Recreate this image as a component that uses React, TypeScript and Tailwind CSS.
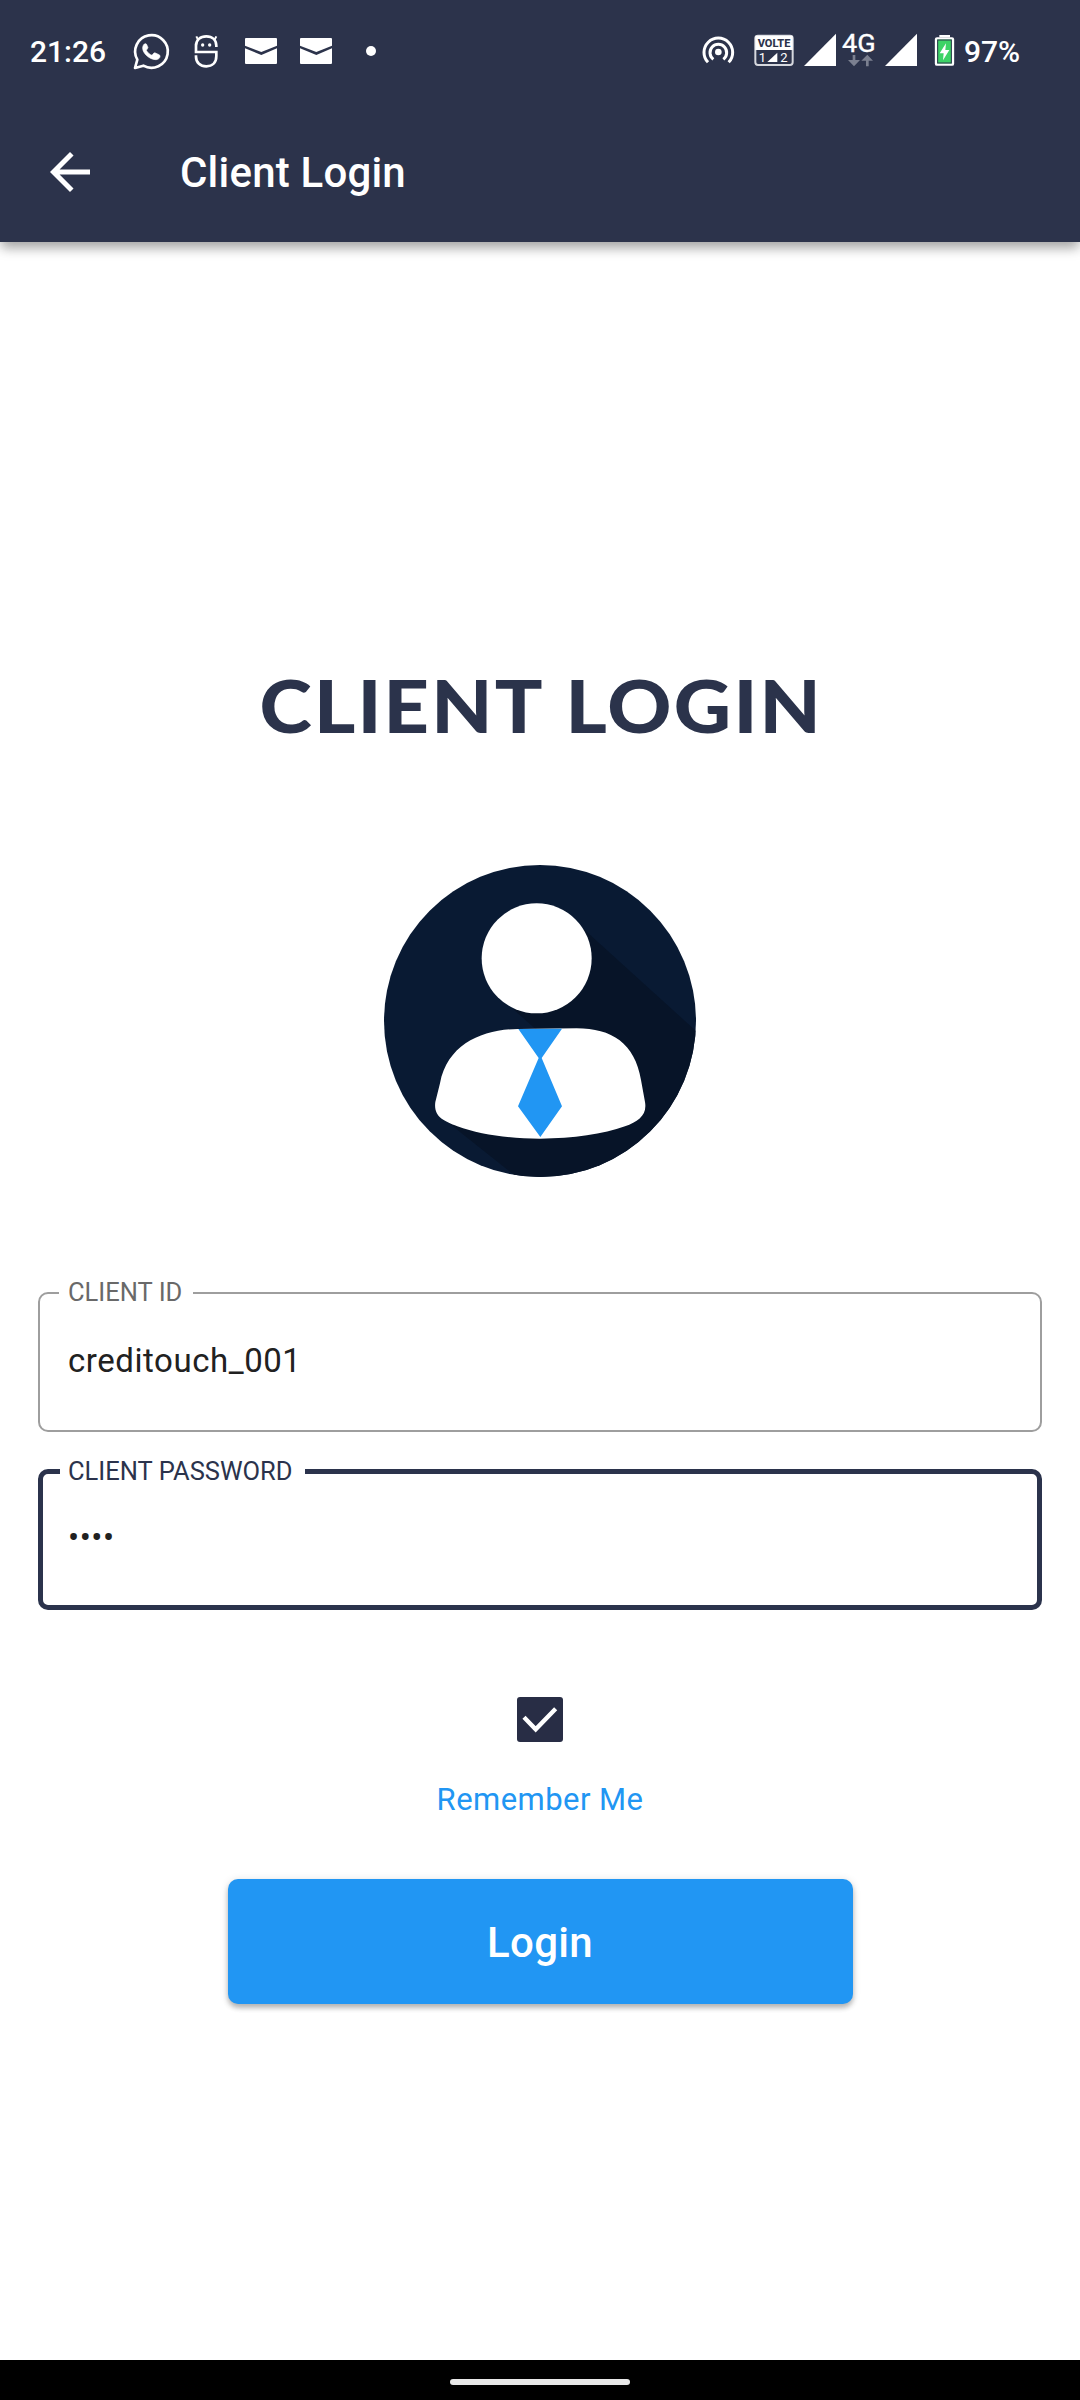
import type { ReactNode } from "react";

function StatusIcon({ box, className, children }: { box: string; className: string; children: ReactNode }) {
  return (
    <svg viewBox={box} className={`h-[36px] shrink-0 overflow-visible ${className}`} fill="none">
      {children}
    </svg>
  );
}

function Mail({ className }: { className: string }) {
  return (
    <StatusIcon box="735 99 96 108" className={className}>
      <path d="M738 114H828Q831 114 831 117V137L784 156L735 137V117Q735 114 738 114Z" fill="#fff" />
      <path d="M735 145L784 165L831 145V189Q831 192 828 192H738Q735 192 735 189Z" fill="#fff" />
    </StatusIcon>
  );
}

function Signal({ className }: { className: string }) {
  return (
    <StatusIcon box="372 99 96 108" className={className}>
      <path d="M468 101V198H372Z" fill="#fff" />
    </StatusIcon>
  );
}

function StatusBar() {
  return (
    <div className="flex h-[102px] items-center">
      <span className="w-[133px] shrink-0 pt-px pl-[30px] text-[30px] leading-[36px] font-medium">21:26</span>
      <StatusIcon box="399 99 111 108" className="w-[37px]">
        <path d="M405 204L412 179A49 49 0 1 1 430 197Z" stroke="#fff" strokeWidth="8" strokeLinejoin="round" />
        <path
          d="M436 131c-4 0-8 6-8 13 0 17 22 35 40 35 7 0 12-5 12-10 0-3-1-4-3-5l-11-5c-2-1-4 0-5 1l-5 6c-7-2-14-9-17-15l4-6c1-2 1-3 0-5l-4-8c-1-1-2-1-3-1z"
          fill="#fff"
          stroke="#fff"
          strokeWidth="2"
        />
      </StatusIcon>
      <StatusIcon box="582 99 75 108" className="ml-[24px] w-[25px]">
        <path
          d="M649 141V137C649 120 637 109 619 109C601 109 588 120 588 137V156H649V168C649 188 637 199 619 199C601 199 588 188 588 170V166"
          stroke="#fff"
          strokeWidth="8"
        />
        <path d="M594 119L589 109M644 119L649 109" stroke="#fff" strokeWidth="6" />
        <circle cx="608" cy="135" r="5" fill="#fff" />
        <circle cx="629" cy="135" r="5" fill="#fff" />
      </StatusIcon>
      <Mail className="ml-[26px] w-[32px]" />
      <Mail className="ml-[23px] w-[32px]" />
      <StatusIcon box="1095 99 36 108" className="ml-[33px] w-[12px]">
        <circle cx="1113" cy="153" r="15" fill="#fff" />
      </StatusIcon>

      <StatusIcon box="66 99 99 108" className="ml-[325px] w-[33px]">
        <circle cx="115" cy="156" r="10" fill="#fff" />
        <path d="M100 178A25 25 0 1 1 130 178" stroke="#fff" strokeWidth="9" />
        <path d="M84 187A43 43 0 1 1 146 187" stroke="#fff" strokeWidth="9" />
      </StatusIcon>
      <StatusIcon box="222 99 120 108" className="ml-[19px] w-[40px]">
        <rect x="226" y="107" width="112" height="88" rx="8" stroke="#d6d8de" strokeWidth="6" />
        <path d="M226 107H338V150H226Z" fill="#fff" />
        <text x="282" y="140" textAnchor="middle" textLength="98" lengthAdjust="spacingAndGlyphs" fontFamily="Roboto" fontWeight="800" fontSize="34" fill="#2c334b">VOLTE</text>
        <text x="236" y="186" fontFamily="Roboto" fontSize="39" fill="#fff">1</text>
        <path d="M292 158V186H262Z" fill="#fff" />
        <text x="301" y="186" fontFamily="Roboto" fontSize="39" fill="#fff">2</text>
      </StatusIcon>
      <Signal className="ml-[10px] w-[32px]" />
      <StatusIcon box="486 99 102 108" className="ml-[6px] w-[34px]">
        <text x="486" y="157" textLength="101" lengthAdjust="spacingAndGlyphs" fontFamily="Roboto" fontSize="77" fill="#fff" stroke="#fff" strokeWidth="1">4G</text>
        <path d="M518 165H526V180H540L522 199L504 180H518ZM558 199H566V182H579L562 164L544 182H558Z" fill="#7b8090" />
      </StatusIcon>
      <Signal className="ml-[9px] w-[32px]" />
      <StatusIcon box="762 99 63 108" className="ml-[17px] w-[21px]">
        <path d="M778 105H810V112H778Z" fill="#fff" />
        <rect x="768" y="115" width="51" height="79" rx="3" fill="#3dd366" stroke="#fff" strokeWidth="7" />
        <rect x="773" y="120" width="41" height="69" stroke="#2c334b" strokeWidth="3" />
        <path d="M798 130L779 160H791L789 181L808 150H796Z" fill="#fff" />
      </StatusIcon>
      <span className="ml-[9px] pt-px text-[30px] leading-[36px] font-medium">97%</span>
    </div>
  );
}

function AppBar() {
  return (
    <div className="flex h-[140px] items-center">
      <svg viewBox="0 0 24 24" className="ml-[40px] size-[60px]" fill="#fff">
        <path d="M20 11H7.83l5.59-5.59L12 4l-8 8 8 8 1.41-1.41L7.83 13H20v-2z" />
      </svg>
      <h1 className="ml-[80px] pt-[2px] text-[42px] leading-[50px] font-medium tracking-[0.2px]">Client Login</h1>
    </div>
  );
}

function Avatar() {
  return (
    <svg viewBox="42 45 936 936" className="mt-[110px] size-[312px]">
      <clipPath id="disc">
        <circle cx="510" cy="513" r="468" />
      </clipPath>
      <g clipPath="url(#disc)">
        <rect x="42" y="45" width="936" height="936" fill="#091a33" />
        <path d="M640 236L978 543V981H440L240 822L500 540L430 478Z" fill="#071428" />
      </g>
      <circle cx="500" cy="325" r="165" fill="#fff" />
      <path
        d="M445 537C340 538 233 580 210 700L196 756C190 800 220 812 262 829C330 854 420 866 510 866C610 866 700 852 765 829C805 814 832 795 825 756L813 690C795 580 725 535 620 535Z"
        fill="#fff"
      />
      <path d="M445 537L576 536L515 624L576 769L511 861L444 769L506 624Z" fill="#2196f3" />
    </svg>
  );
}

export default function App() {
  return (
    <div className="flex h-[2400px] w-[1080px] flex-col overflow-hidden bg-white font-['Roboto',sans-serif]">
      <header className="h-[242px] shrink-0 bg-[#2c334b] text-white shadow-[0_8px_10px_-2px_rgba(0,0,0,0.2),0_4px_14px_rgba(0,0,0,0.22)]">
        <StatusBar />
        <AppBar />
      </header>

      <main className="flex flex-1 flex-col items-center">
        <h2 className="mt-[413px] origin-center scale-x-[1.1] pl-[2px] text-[72px] leading-[100px] font-black tracking-[2px] whitespace-nowrap text-[#2b334b] [word-spacing:2px] font-['Lato',sans-serif]">
          CLIENT LOGIN
        </h2>
        <Avatar />

        <div className="relative mt-[115px] h-[140px] w-[1004px] rounded-[10px] border-2 border-[#9e9e9e]">
          <label className="absolute top-[-18px] left-[19px] h-[32px] w-[134px] bg-white pl-[9px] text-[25.5px] leading-[32px] text-[#696969]">CLIENT ID</label>
          <div className="pt-[47px] pl-[28px] text-[33px] leading-[40px] tracking-[0.55px] text-[#212121]">creditouch_001</div>
        </div>

        <div className="relative mt-[37px] h-[141px] w-[1004px] rounded-[10px] border-5 border-[#2b334c]">
          <label className="absolute top-[-19px] left-[17px] h-[32px] w-[245px] bg-white pl-[8px] text-[25.5px] leading-[32px] text-[#2b334c]">CLIENT PASSWORD</label>
          <div className="pt-[44px] pl-[25px] text-[33px] leading-[40px] tracking-[0.55px] text-[#212121]">••••</div>
        </div>

        <div className="mt-[87px] h-[45px] w-[46px] rounded-[3px] bg-[#282d45]">
          <svg viewBox="351 81 138 135" className="size-full" fill="none">
            <path d="M372 142L407 178L467 116" stroke="#fff" strokeWidth="13" />
          </svg>
        </div>
        <p className="mt-[38px] text-[31px] leading-[40px] tracking-[0.45px] text-[#2196f3]">Remember Me</p>

        <button className="mt-[59px] h-[125px] w-[625px] rounded-[10px] bg-[#2196f3] pt-[2px] text-[42px] leading-[50px] font-medium tracking-[0.3px] text-white shadow-[0_4px_5px_rgba(0,0,0,0.24),0_1px_8px_rgba(0,0,0,0.12)]">
          Login
        </button>
      </main>

      <footer className="flex h-[40px] shrink-0 justify-center bg-black pt-[19px]">
        <div className="h-[6px] w-[180px] rounded-full bg-[#e8e8e8]" />
      </footer>
    </div>
  );
}
